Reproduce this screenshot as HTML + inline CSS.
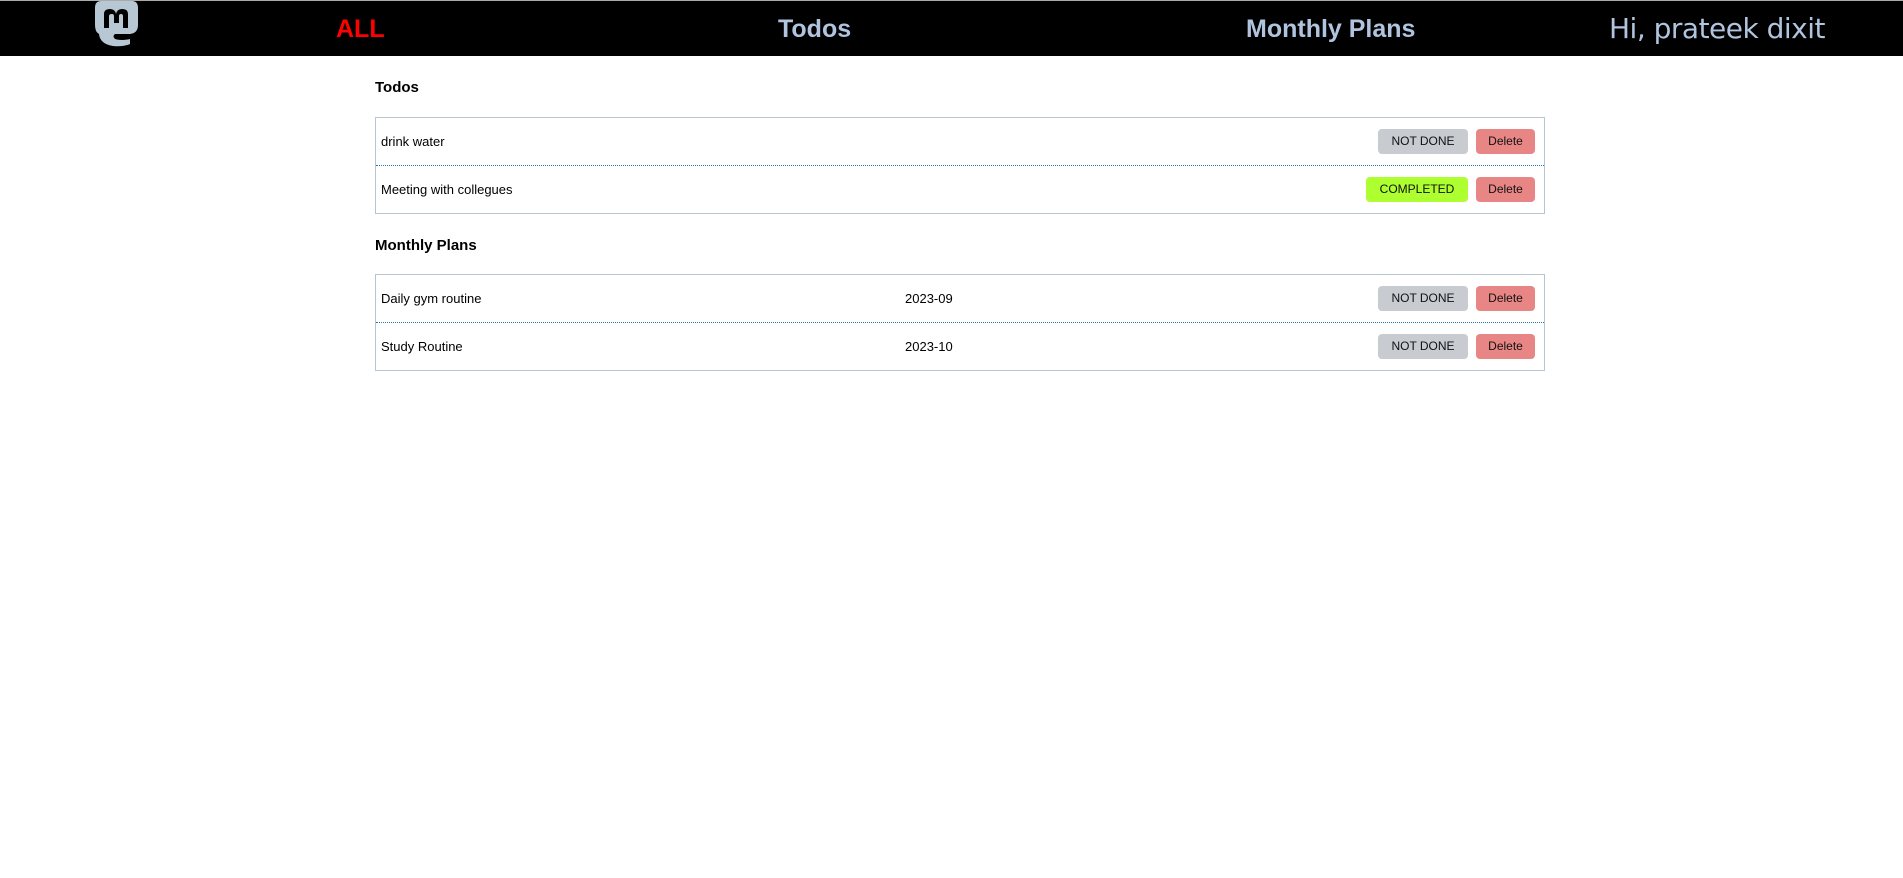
<!DOCTYPE html>
<html><head><meta charset="utf-8">
<style>
*{box-sizing:border-box;margin:0;padding:0}
html,body{width:1903px;height:878px;background:#fff;overflow:hidden;font-family:"Liberation Sans",sans-serif}
.top{position:absolute;left:0;top:0;width:1903px;height:1px;background:#aaa}
.nav{position:absolute;left:0;top:1px;width:1903px;height:55px;background:#000}
.nav span{position:absolute;top:0;line-height:56px;font-weight:bold;font-size:25px;color:#b0c4de}
.nav .hi{font-weight:normal;font-family:"DejaVu Sans","Liberation Sans",sans-serif;font-size:28px;letter-spacing:-0.5px}
h3{position:absolute;left:375px;font-size:15px;font-weight:bold;color:#000}
.tbl{position:absolute;left:375px;width:1170px;border:1px solid #b7c6d3}
.row{position:relative;height:47px;font-size:13px;line-height:47px;padding-left:5px;color:#000}
.row+.row{height:48px;border-top:1px dotted #2a77b5}
.row .d{position:absolute;left:529px;top:0}
.b{position:absolute;top:11px;height:25px;line-height:25px;font-size:12px;text-align:center;border-radius:4px;color:#111}
.nd{left:1002px;width:90px;background:#c8ccd0}
.cp{left:990px;width:102px;background:#adff2f}
.del{left:1100px;width:59px;background:#e88686}
</style></head><body>
<div class="top"></div>
<div class="nav">
<svg style="position:absolute;left:95px;top:0" width="43" height="46" viewBox="0 0 43 46">
<path d="M6 0 H37 Q43 0 43 7 V24 Q43 32 35 33 H20 Q17 35 20 38 Q26 40 35 38 V43 Q28 46 18 45 Q5 43 4 33 Q0 31 0 24 V7 Q0 0 6 0Z" fill="#b7c7d3"/>
<path d="M9 27 V13 Q9 8 15 8 Q20 8 21 13 Q22 8 27 8 Q33 8 33 13 V27 H28 V15 Q28 13 26 13 Q24 13 24 15 V22 H19 V15 Q19 13 17 13 Q14 13 14 15 V27Z" fill="#000"/>
</svg>
<span style="left:336px;color:#f00">ALL</span>
<span style="left:778px">Todos</span>
<span style="left:1246px">Monthly Plans</span>
<span class="hi" style="left:1609px">Hi, prateek dixit</span>
</div>
<h3 style="top:79px">Todos</h3>
<div class="tbl" style="top:117px">
<div class="row">drink water<div class="b nd">NOT DONE</div><div class="b del">Delete</div></div>
<div class="row">Meeting with collegues<div class="b cp">COMPLETED</div><div class="b del">Delete</div></div>
</div>
<h3 style="top:237px">Monthly Plans</h3>
<div class="tbl" style="top:274px">
<div class="row">Daily gym routine<span class="d">2023-09</span><div class="b nd">NOT DONE</div><div class="b del">Delete</div></div>
<div class="row">Study Routine<span class="d">2023-10</span><div class="b nd">NOT DONE</div><div class="b del">Delete</div></div>
</div>
</body></html>
